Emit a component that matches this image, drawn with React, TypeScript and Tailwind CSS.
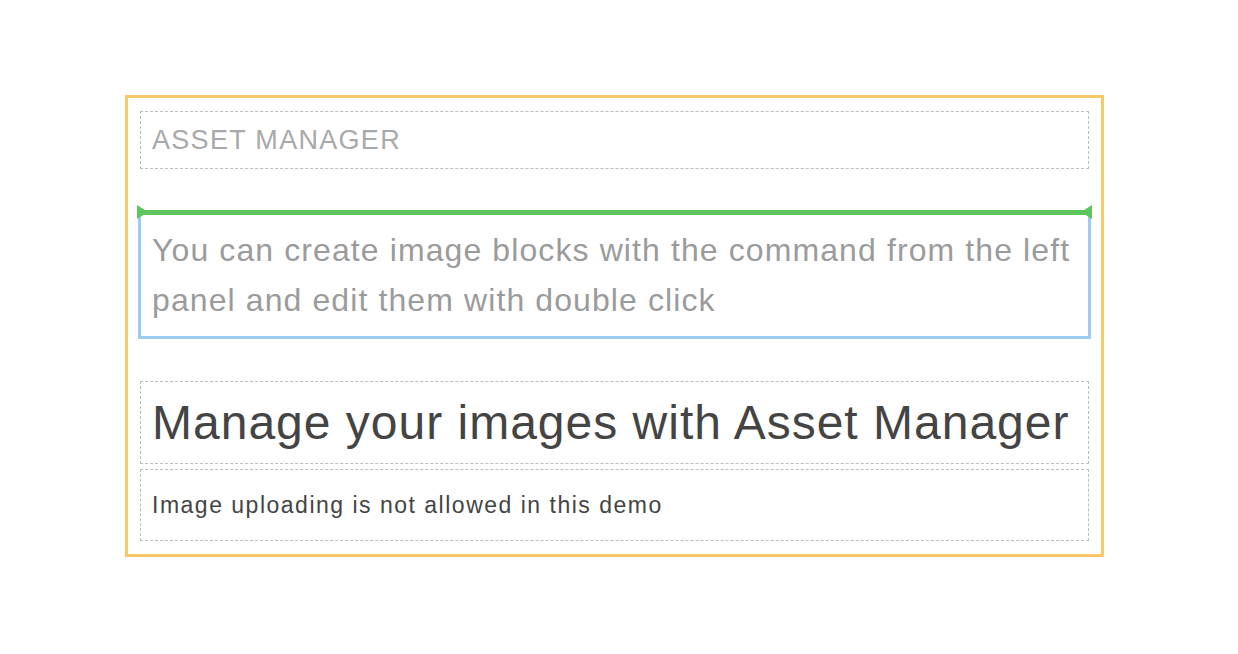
export default function App() {
  return (
    <div className="w-[1238px] h-[654px] bg-white overflow-hidden pt-[95px] pl-[125px]" style={{ fontFamily: '"Liberation Sans", Arial, sans-serif' }}>
      <div className="w-[979px] border-[3px] border-[#f9c86b] pt-[13px] px-[12px] pb-[13px] flex flex-col">
        <div className="h-[58px] border border-dashed border-[#bdbdbd] px-[11px] flex items-center">
          <span className="text-[27px] leading-[36px] tracking-[1.3px] text-[#a9a9a9]">ASSET MANAGER</span>
        </div>

        {/* selected text block, with the drop placeholder on top */}
        <div className="relative mt-[43px] -mx-[2px] border-[3px] border-[#9fcbf0] px-[11px] pt-[10px] pb-[11px]">
          <div className="absolute -top-[5px] -left-[4px] -right-[4px] h-[5px] bg-[#5cc55c]">
            <div className="absolute left-0 -top-[5px] w-0 h-0 border-y-[7px] border-y-transparent border-l-[11px] border-l-[#5cc55c]" />
            <div className="absolute right-0 -top-[5px] w-0 h-0 border-y-[7px] border-y-transparent border-r-[11px] border-r-[#5cc55c]" />
          </div>
          <p className="text-[32px] leading-[50px] tracking-[1.1px] text-[#9b9b9b]">
            You can create image blocks with the command from the left panel and edit them with double click
          </p>
        </div>

        <div className="mt-[42px] h-[83px] border border-dashed border-[#bdbdbd] px-[11px] flex items-center">
          <h1 className="text-[48px] leading-[56px] tracking-[1px] text-[#444444]">Manage your images with Asset Manager</h1>
        </div>

        <div className="mt-[5px] h-[72px] border border-dashed border-[#bdbdbd] px-[11px] flex items-center">
          <p className="text-[23px] leading-[30px] tracking-[1.5px] text-[#444444]">Image uploading is not allowed in this demo</p>
        </div>
      </div>
    </div>
  );
}
